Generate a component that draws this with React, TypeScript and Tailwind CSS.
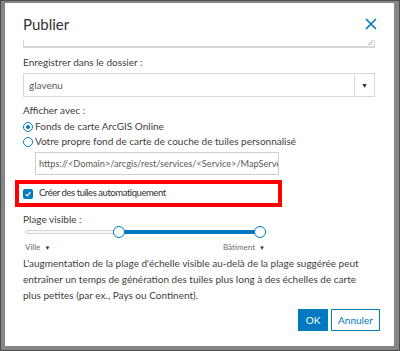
const font = { fontFamily: "Lato, 'Open Sans', sans-serif" };

export default function App() {
	return (
		<div className="w-[400px] h-[351px] bg-[#858585] border border-[#4d4d4d] pl-[4px] pt-[2px]" style={font}>
			<div className="w-[389px] h-[343px] bg-white flex flex-col text-[#404040]">
				<div className="h-[37px] pt-[5px] pl-[18px] pr-[17px] flex items-center justify-between">
					<h1 className="text-[15px] text-[#323232] leading-none">Publier</h1>
					<svg width="12" height="12" viewBox="0 0 12 12">
						<path d="M1 1 L11 11 M11 1 L1 11" stroke="#0079c1" strokeWidth="1.6" />
					</svg>
				</div>

				<div className="pl-[18px] pr-[19px] flex flex-col">
					<div className="h-[8px] border-x border-b-2 border-[#d6d6d6] relative">
						<ResizeGrip />
					</div>

					<div className="mt-[5px] h-[18px] text-[10px] leading-[18px]">Enregistrer dans le dossier :</div>
					<div className="mt-[2px] h-[24px] border border-[#d9d9d9] flex items-stretch">
						<div className="flex-1 pl-[5px] flex items-center text-[10px] text-[#595959]">glavenu</div>
						<div className="w-[20px] border-l border-[#d9d9d9] flex items-center justify-center">
							<span className="text-[7px] text-[#323232]">▼</span>
						</div>
					</div>

					<div className="mt-[5px] h-[17px] text-[10px] leading-[17px]">Afficher avec :</div>
					<RadioRow checked label="Fonds de carte ArcGIS Online" />
					<RadioRow label="Votre propre fond de carte de couche de tuiles personnalisé" />
					<div className="mt-[3px] ml-[12px] w-[244px] h-[23px] border border-[#cfcfcf] flex items-center px-[3px] overflow-hidden whitespace-nowrap text-[9.2px] text-[#595959]">
						https://&lt;Domain&gt;/arcgis/rest/services/&lt;Service&gt;/MapServer
					</div>

					<div className="mt-[5px] -ml-[8px] w-[267px] h-[27px] border-[4px] border-[#ff0000] flex items-center pl-[4px]">
						<div className="w-[10px] h-[10px] rounded-[2px] bg-[#0079c1] flex items-center justify-center">
							<svg width="8" height="8" viewBox="0 0 10 10">
								<path d="M2 5.2 L4.2 7.3 L8 2.8" fill="none" stroke="white" strokeWidth="1.6" />
							</svg>
						</div>
						<span className="ml-[6px] text-[9.5px] tracking-[-0.45px] text-[#323232]">Créer des tuiles automatiquement</span>
					</div>

					<div className="mt-[4px] h-[16px] text-[10px] leading-[16px]">Plage visible :</div>
					<div className="-mt-[1px] h-[12px] relative w-[241px] ml-[2px]">
						<div className="absolute left-0 right-[6px] top-[4px] h-[4px] rounded-full border border-[#d4d4d4] bg-[#f6f6f6]" />
						<div className="absolute left-[94px] right-[6px] top-[4px] h-[4px] bg-[#0079c1]" />
						<div className="absolute left-[88px] top-0 w-[12px] h-[12px] rounded-full bg-white border-[1.5px] border-[#0079c1]" />
						<div className="absolute left-[229px] top-0 w-[12px] h-[12px] rounded-full bg-white border-[1.5px] border-[#0079c1]" />
					</div>
					<div className="mt-[2px] h-[14px] flex text-[8px] text-[#6e6e6e] leading-[14px] ml-[2px]">
						<span className="w-[198px]">
							Ville <span className="ml-[2px] text-[6px] text-[#323232]">▼</span>
						</span>
						<span>
							Bâtiment <span className="ml-[2px] text-[6px] text-[#323232]">▼</span>
						</span>
					</div>

					<p className="mt-[1px] text-[10px] leading-[16px] pr-[2px]">
						L'augmentation de la plage d'échelle visible au-delà de la plage suggérée peut entraîner un temps de
						génération des tuiles plus long à des échelles de carte plus petites (par ex., Pays ou Continent).
					</p>
				</div>

				<div className="mt-auto mb-[15px] pr-[14px] flex justify-end gap-[3px]">
					<button className="w-[30px] h-[22px] bg-[#0079c1] text-white text-[10px]">OK</button>
					<button className="w-[49px] h-[22px] bg-white border border-[#0079c1] text-[#0079c1] text-[10px]">
						Annuler
					</button>
				</div>
			</div>
		</div>
	);
}

function RadioRow({ checked, label }: { checked?: boolean; label: string }) {
	return (
		<div className="h-[15px] flex items-center whitespace-nowrap">
			<div className="w-[10px] h-[10px] rounded-full border border-[#0079c1] bg-white flex items-center justify-center">
				{checked && <div className="w-[4px] h-[4px] rounded-full bg-[#0079c1]" />}
			</div>
			<span className="ml-[2px] text-[10px]">{label}</span>
		</div>
	);
}

function ResizeGrip() {
	return (
		<svg className="absolute right-[1px] bottom-[1px]" width="5" height="5" viewBox="0 0 5 5">
			<path d="M0 5 L5 0 M2.5 5 L5 2.5" stroke="#999" strokeWidth="0.8" />
		</svg>
	);
}
